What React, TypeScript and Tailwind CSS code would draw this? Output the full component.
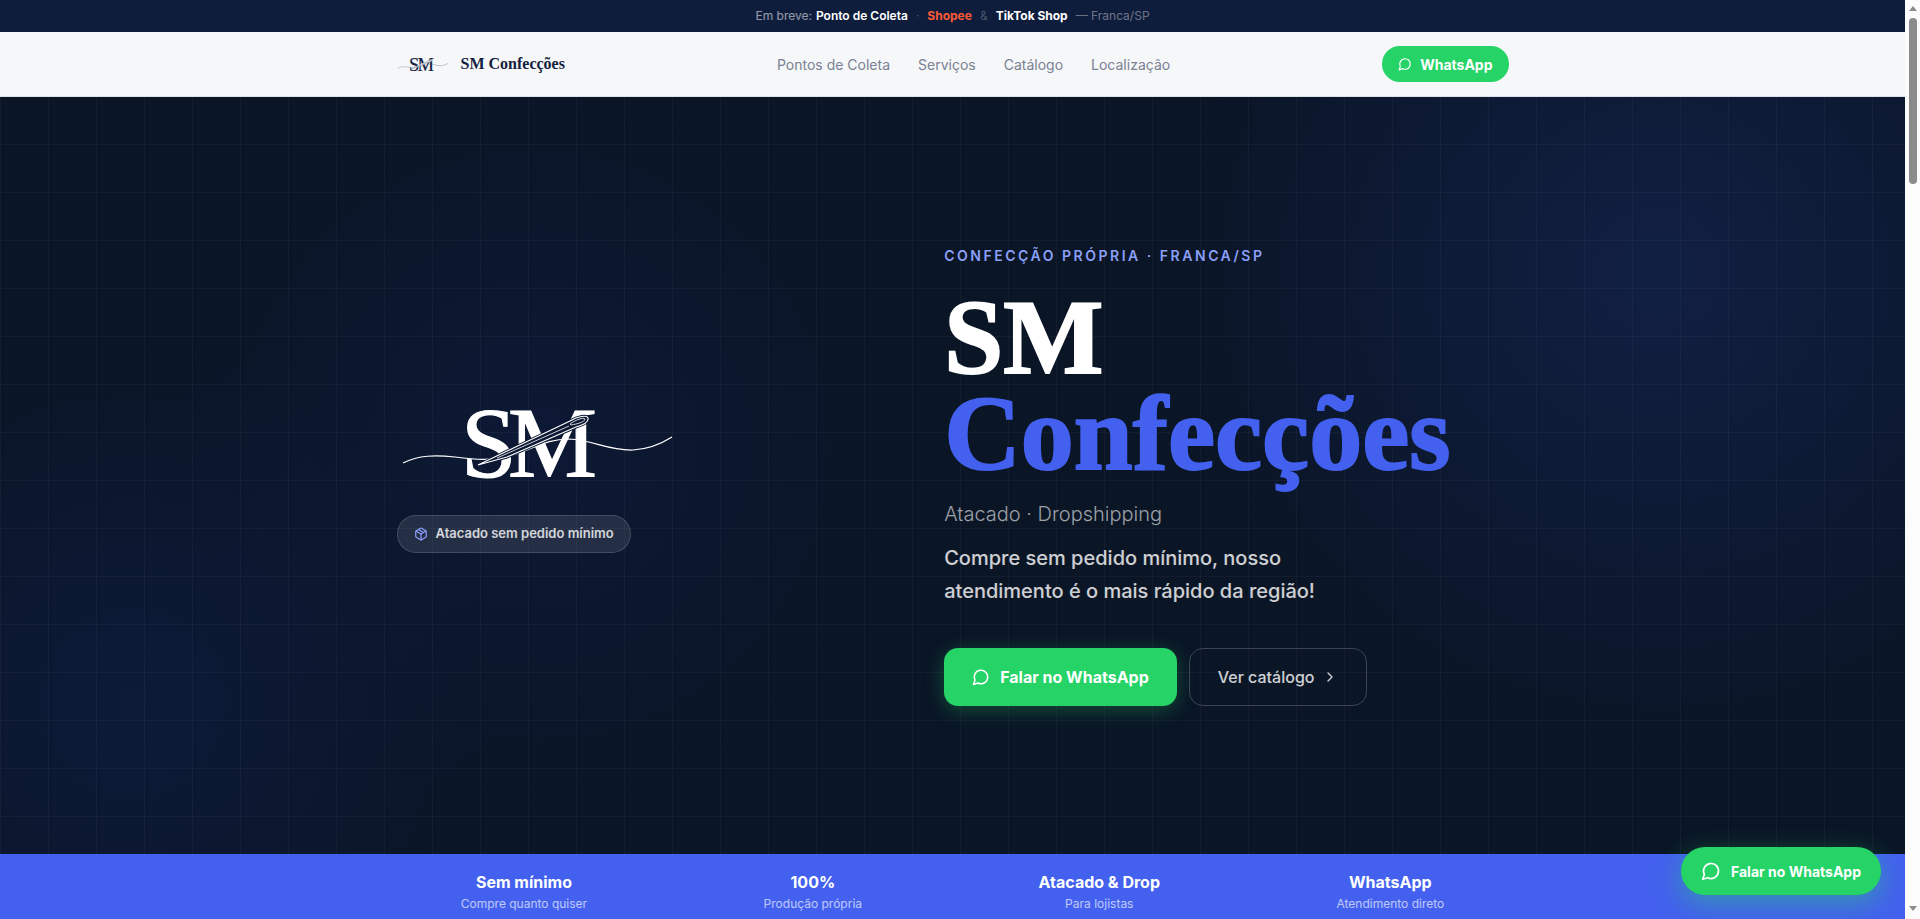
import { ChevronRight, Package } from 'lucide-react';

const navLinks = [
  { label: 'Pontos de Coleta', href: '#pontos' },
  { label: 'Serviços', href: '#servicos' },
  { label: 'Catálogo', href: '#catalogo' },
  { label: 'Localização', href: '#localizacao' }
];

const stats = [
  { title: 'Sem mínimo', text: 'Compre quanto quiser' },
  { title: '100%', text: 'Produção própria' },
  { title: 'Atacado & Drop', text: 'Para lojistas' },
  { title: 'WhatsApp', text: 'Atendimento direto' }
];

function ChatIcon({ className }: { className: string }) {
  return (
    <svg
      viewBox="0 0 24 24"
      className={className}
      fill="none"
      stroke="currentColor"
      strokeWidth="2"
      strokeLinecap="round"
      strokeLinejoin="round"
      aria-hidden="true"
    >
      <path d="M7.9 20A9 9 0 1 0 4 16.1L2 22Z" />
    </svg>
  );
}

function Logo({ className, needle }: { className: string; needle: string }) {
  return (
    <svg viewBox="0 -12 280 112" className={className} role="img" aria-label="SM Confecções" fill="none">
      <text
        y="77"
        fontSize="100"
        fontFamily="'Liberation Serif', serif"
        fill="currentColor"
        stroke="currentColor"
        strokeWidth="1.2"
      >
        <tspan x="64">S</tspan>
        <tspan x="111">M</tspan>
      </text>
      {/* thread */}
      <path
        d="M6 64C22 56 38 56 58 58C80 61 96 62 116 56C140 48 150 40 172 40C196 41 212 52 236 51C252 50 264 45 275 38"
        stroke="currentColor"
        strokeWidth="1.2"
      />
      {/* needle */}
      <path d="M81 66L108 53L173 22C181 17 190 16 191 19C192 23 186 26 179 28L110 58Z" fill={needle} stroke={needle} strokeWidth="3" />
      <path d="M81 66L108 53L173 22C181 17 190 16 191 19C192 23 186 26 179 28L110 58Z" stroke="currentColor" strokeWidth="1.1" />
      <path d="M173 25C178 21 187 18 188 20C188 23 180 25 174 26Z" stroke="currentColor" strokeWidth="0.8" />
      <path d="M100 59L172 27" stroke="currentColor" strokeWidth="0.8" />
    </svg>
  );
}

function TopBar() {
  return (
    <div className="flex h-8 items-center justify-center gap-1 bg-[#0f1d3d] text-[12px] text-white/55">
      <span>Em breve:</span>
      <strong className="font-semibold text-white">Ponto de Coleta</strong>
      <span className="mx-1 text-white/25">·</span>
      <strong className="font-bold text-[#ff5a36]">Shopee</strong>
      <span className="mx-1 text-white/25">&amp;</span>
      <strong className="font-bold text-white">TikTok Shop</strong>
      <span className="ml-1 text-white/40">— Franca/SP</span>
    </div>
  );
}

function Header() {
  return (
    <header className="border-b border-[#dde1ea] bg-[#f5f7f8]">
      <div className="mx-auto flex h-16 max-w-[1160px] items-center justify-between px-6">
        <a href="#inicio" className="flex items-center gap-3 text-[#14203f]">
          <Logo className="w-[52px]" needle="#f5f7f8" />
          <span className="font-['Liberation_Serif',serif] text-[16px] font-bold">SM Confecções</span>
        </a>
        <nav className="flex gap-7 text-[14px] text-[#7a8194]">
          {navLinks.map((link) => (
            <a key={link.href} href={link.href}>
              {link.label}
            </a>
          ))}
        </nav>
        <a
          href="#whatsapp"
          className="flex h-9 items-center gap-2 rounded-full bg-[#25d366] px-4 text-[14px] font-bold text-white"
        >
          <ChatIcon className="size-[14px]" />
          WhatsApp
        </a>
      </div>
    </header>
  );
}

function Hero() {
  return (
    <section
      id="inicio"
      className="relative flex min-h-[calc(100vh-162px)] items-center bg-[#0a1526] bg-[radial-gradient(circle_at_87%_23%,#111f43_0,transparent_480px),radial-gradient(circle_at_7%_80%,#0d1a38_0,transparent_360px),radial-gradient(circle_at_28%_46%,#0d1935_0,transparent_360px)]"
    >
      <div className="absolute inset-0 bg-[linear-gradient(rgba(255,255,255,0.035)_1px,transparent_1px),linear-gradient(90deg,rgba(255,255,255,0.035)_1px,transparent_1px)] bg-[size:48px_48px] bg-[position:0_-1px]" />
      <div className="relative mx-auto grid w-full max-w-[1160px] grid-cols-[6fr_7fr] items-center gap-16 px-6">
        <div className="flex flex-col items-start gap-4 pb-3">
          <Logo className="w-[280px] text-white" needle="#0c1833" />
          <span className="flex h-[38px] items-center gap-2 rounded-full border border-white/15 bg-white/10 px-4 text-[13px] font-semibold text-white/80">
            <Package size={14} className="text-[#8ea2ff]" />
            Atacado sem pedido mínimo
          </span>
        </div>
        <div>
          <p className="mb-6 text-[14px] font-semibold leading-5 tracking-[0.18em] text-[#8ba0f8]">
            CONFECÇÃO PRÓPRIA · FRANCA/SP
          </p>
          <h1 className="mb-4 font-['Liberation_Serif',serif] text-[106px] font-bold leading-[96px] text-white [-webkit-text-stroke:2px_currentColor]">
            SM
            <span className="block text-[#4361ee]">Confecções</span>
          </h1>
          <p className="mb-3 text-[20px] font-light leading-8 text-white/60">Atacado · Dropshipping</p>
          <p className="mb-10 max-w-[400px] text-[20px] font-medium leading-[33px] text-white/80">
            Compre sem pedido mínimo, nosso atendimento é o mais rápido da região!
          </p>
          <div className="flex gap-3">
            <a
              href="#whatsapp"
              className="flex h-[58px] items-center gap-[10px] rounded-[14px] bg-[#25d366] px-7 text-[16px] font-bold text-white shadow-[0_4px_20px_rgba(37,211,102,0.3)]"
            >
              <ChatIcon className="size-[18px]" />
              Falar no WhatsApp
            </a>
            <a
              href="#catalogo"
              className="flex h-[58px] items-center gap-2 rounded-[14px] border border-white/20 px-7 text-[16px] font-medium text-white/80"
            >
              Ver catálogo
              <ChevronRight size={16} />
            </a>
          </div>
        </div>
      </div>
    </section>
  );
}

function Stats() {
  return (
    <section className="bg-[#4361ee] py-4">
      <div className="mx-auto flex max-w-[1160px] justify-around text-center">
        {stats.map((stat) => (
          <div key={stat.title}>
            <p className="text-[16px] font-bold leading-6 text-white">{stat.title}</p>
            <p className="text-[12px] leading-5 text-white/65">{stat.text}</p>
          </div>
        ))}
      </div>
    </section>
  );
}

function Scrollbar() {
  return (
    <div className="flex w-[15px] shrink-0 flex-col items-center bg-[#fcfcfc] py-1" aria-hidden="true">
      <svg viewBox="0 0 10 14" className="h-[14px] w-[10px]" fill="#8b8b8b">
        <path d="M5 2L9 7H1Z" />
      </svg>
      <div className="h-[166px] w-2 rounded-full bg-[#8b8b8b]" />
      <svg viewBox="0 0 10 14" className="mt-auto h-[14px] w-[10px]" fill="#8b8b8b">
        <path d="M5 10L9 5H1Z" />
      </svg>
    </div>
  );
}

export default function App() {
  return (
    <div className="flex h-screen overflow-hidden font-[Inter,sans-serif]">
      <div className="relative min-w-0 flex-1 overflow-hidden">
        <TopBar />
        <Header />
        <main>
          <Hero />
          <Stats />
        </main>
        <a
          href="#whatsapp"
          className="absolute bottom-6 right-6 flex h-12 items-center gap-[10px] rounded-full bg-[#25d366] px-5 text-[14px] font-bold text-white shadow-[0_8px_28px_rgba(37,211,102,0.45)]"
        >
          <ChatIcon className="size-5" />
          Falar no WhatsApp
        </a>
      </div>
      <Scrollbar />
    </div>
  );
}
